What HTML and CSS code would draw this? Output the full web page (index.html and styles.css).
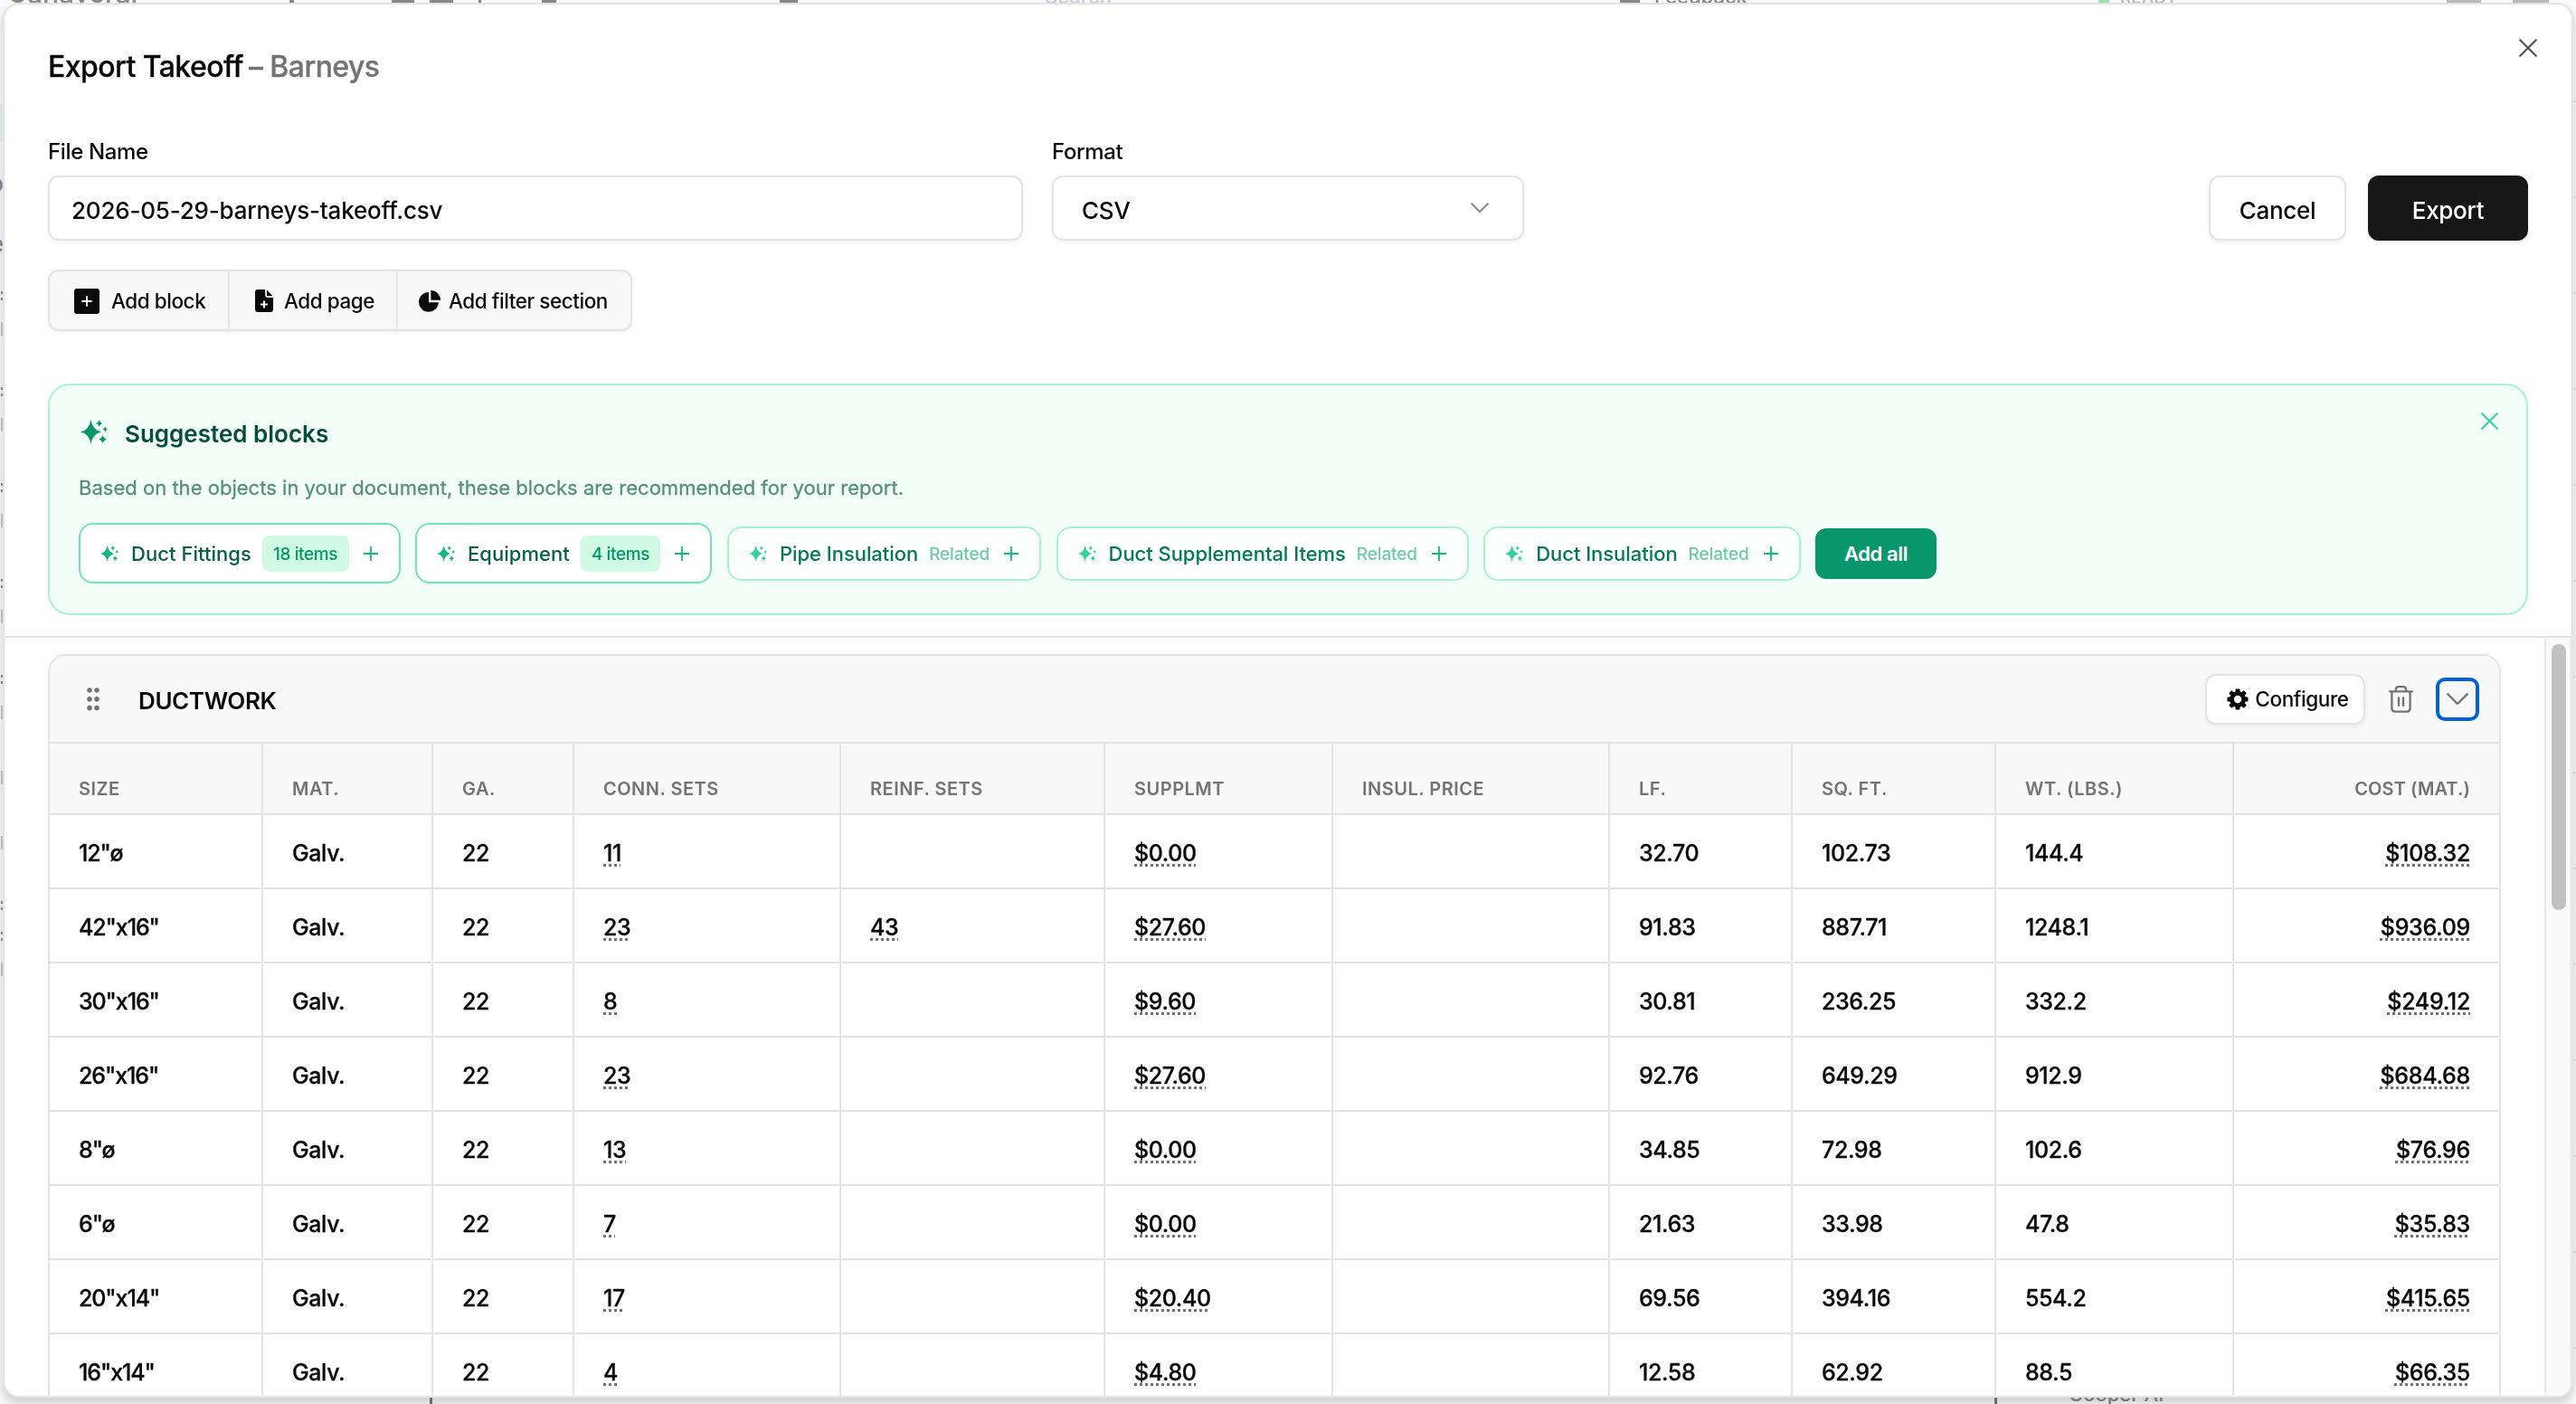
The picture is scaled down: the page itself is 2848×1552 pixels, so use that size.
FILE: index.html
```html
<!DOCTYPE html>
<html lang="en">
<head>
    <meta charset="UTF-8">
    <meta name="viewport" content="width=device-width, initial-scale=1.0">
    <title>Export Takeoff – Barneys</title>
    <link rel="stylesheet" href="styles.css">
</head>
<body>
    <svg class="sprite" width="0" height="0">
        <symbol id="sparkles" viewBox="0 0 30 27">
            <path d="M11.5 0Q13.4 11.6 23 13.5Q13.4 15.4 11.5 27Q9.6 15.4 0 13.5Q9.6 11.6 11.5 0Z"/>
            <path d="M20.7 .2Q21.5 3.2 24.4 4Q21.5 4.8 20.7 7.8Q19.9 4.8 17 4Q19.9 3.2 20.7 .2Z"/>
            <path d="M27.3 7.4Q27.9 9.9 30 10.5Q27.9 11.1 27.3 13.6Q26.7 11.1 24.6 10.5Q26.7 9.9 27.3 7.4Z"/>
            <path d="M24.5 16.8Q25.5 20.5 28.6 21.5Q25.5 22.5 24.5 26.2Q23.5 22.5 20.4 21.5Q23.5 20.5 24.5 16.8Z"/>
        </symbol>
        <symbol id="plus" viewBox="0 0 16 16">
            <path d="M8 .7V15.3M.7 8H15.3" fill="none" stroke="currentColor" stroke-width="1.8" stroke-linecap="round"/>
        </symbol>
        <symbol id="close" viewBox="0 0 20 20">
            <path d="M1.2 1.2L18.8 18.8M18.8 1.2L1.2 18.8" fill="none" stroke="currentColor" stroke-width="2.2" stroke-linecap="round"/>
        </symbol>
        <symbol id="chevron" viewBox="0 0 24 14">
            <path d="M1.3 1.3L12 12L22.7 1.3" fill="none" stroke="currentColor" stroke-width="2.4" stroke-linecap="round" stroke-linejoin="round"/>
        </symbol>
    </svg>

    <!-- document behind the dialog -->
    <div class="page">
        <div class="topbar">
            <span class="brand">Canaveral</span>
            <i class="tool t1"></i><i class="tool t2"></i><i class="tool t3"></i><i class="tool t4"></i><i class="tool t5"></i><i class="tool t6"></i>
            <span class="search">Search</span>
            <i class="tool person"></i>
            <span class="feedback">Feedback</span>
            <i class="status"></i>
            <span class="ready">READY</span>
            <i class="tool t7"></i><i class="tool t8"></i>
        </div>
        <div class="page-body">
            <div class="rail">
                <i class="selected"></i>
                <span>o</span><span>e</span>
                <i class="mark"></i><i class="block"></i>
                <i class="mark"></i><i class="block"></i>
                <i class="mark"></i><i class="block"></i>
                <i class="mark"></i><i class="block"></i>
                <i class="mark"></i><i class="block"></i>
                <i class="block"></i><i class="block"></i>
                <i class="mark"></i><i class="mark"></i><i class="block"></i>
            </div>
            <div class="rail rail-right"></div>
        </div>
        <div class="bottombar">
            <i class="post"></i>
            <i class="post"></i>
            <span class="assistant">Cooper AI</span>
        </div>
    </div>

    <div class="modal">
        <div class="modal-header">
            <button class="close-btn"><svg width="20" height="20"><use href="#close"/></svg></button>
            <h1>Export Takeoff <span>– Barneys</span></h1>

            <div class="form-row">
                <div class="field field-name">
                    <label>File Name</label>
                    <div class="input">2026-05-29-barneys-takeoff.csv</div>
                </div>
                <div class="field field-format">
                    <label>Format</label>
                    <div class="input select">CSV <svg width="20" height="12"><use href="#chevron"/></svg></div>
                </div>
                <div class="actions">
                    <button class="btn">Cancel</button>
                    <button class="btn btn-dark">Export</button>
                </div>
            </div>

            <div class="btn-group">
                <button class="add-block">
                    <svg width="28" height="28" viewBox="0 0 28 28"><rect width="28" height="28" rx="3"/><path d="M14 9V19M9 14H19" stroke="#fff" stroke-width="1.8" stroke-linecap="round"/></svg>
                    Add block
                </button>
                <button class="add-page">
                    <svg width="20" height="25" viewBox="0 0 20 25"><path d="M3 0H11.2V6.6Q11.2 9 13.6 9H20V22Q20 25 17 25H3Q0 25 0 22V3Q0 0 3 0Z"/><path d="M13 .6L19.4 7.2H14.2Q13 7.2 13 6Z"/><path d="M10 12.6V20.4M6.1 16.5H13.9" stroke="#f8f8f8" stroke-width="2"/></svg>
                    Add page
                </button>
                <button class="add-filter">
                    <svg width="24" height="24" viewBox="0 0 24 24"><path d="M11 2V13.2H21.8A10.9 10.9 0 1 1 11 2Z"/><path d="M13.4 0A10.6 10.6 0 0 1 24 10.8H13.4Z"/></svg>
                    Add filter section
                </button>
            </div>

            <div class="suggested">
                <button class="dismiss"><svg width="19" height="19"><use href="#close"/></svg></button>
                <h2><svg width="30" height="27"><use href="#sparkles"/></svg>Suggested blocks</h2>
                <p>Based on the objects in your document, these blocks are recommended for your report.</p>
                <div class="chips">
                    <button class="chip">
                        <svg class="spark" width="20" height="18"><use href="#sparkles"/></svg>
                        <span class="name">Duct Fittings</span><span class="count">18 items</span>
                        <svg width="16" height="16"><use href="#plus"/></svg>
                    </button>
                    <button class="chip">
                        <svg class="spark" width="20" height="18"><use href="#sparkles"/></svg>
                        <span class="name">Equipment</span><span class="count">4 items</span>
                        <svg width="16" height="16"><use href="#plus"/></svg>
                    </button>
                    <button class="chip related">
                        <svg class="spark" width="20" height="18"><use href="#sparkles"/></svg>
                        <span class="name">Pipe Insulation</span><span class="tag">Related</span>
                        <svg width="16" height="16"><use href="#plus"/></svg>
                    </button>
                    <button class="chip related">
                        <svg class="spark" width="20" height="18"><use href="#sparkles"/></svg>
                        <span class="name">Duct Supplemental Items</span><span class="tag">Related</span>
                        <svg width="16" height="16"><use href="#plus"/></svg>
                    </button>
                    <button class="chip related">
                        <svg class="spark" width="20" height="18"><use href="#sparkles"/></svg>
                        <span class="name">Duct Insulation</span><span class="tag">Related</span>
                        <svg width="16" height="16"><use href="#plus"/></svg>
                    </button>
                    <button class="add-all">Add all</button>
                </div>
            </div>
        </div>

        <div class="modal-body">
            <div class="blocks">
                <div class="card">
                    <div class="card-head">
                        <svg class="grip" width="14" height="26" viewBox="0 0 14 26"><circle cx="3" cy="3" r="2.8"/><circle cx="11" cy="3" r="2.8"/><circle cx="3" cy="12.8" r="2.8"/><circle cx="11" cy="12.8" r="2.8"/><circle cx="3" cy="22.6" r="2.8"/><circle cx="11" cy="22.6" r="2.8"/></svg>
                        <h3>DUCTWORK</h3>
                        <button class="configure">
                            <svg width="24" height="24" viewBox="0 0 24 24"><path fill-rule="evenodd" d="M9.8 .5h4.4l.5 3 1.5.7 2.6-1.9 2.9 2.9-1.9 2.6.7 1.5 3 .5v4.4l-3 .5-.7 1.5 1.9 2.6-2.9 2.9-2.6-1.9-1.5.7-.5 3H9.8l-.5-3-1.5-.7-2.6 1.9-2.9-2.9 1.9-2.6-.7-1.5-3-.5V9.8l3-.5.7-1.5-1.9-2.6 2.9-2.9 2.6 1.9 1.5-.7ZM12 7.8a4.2 4.2 0 1 0 0 8.4a4.2 4.2 0 1 0 0-8.4Z"/></svg>
                            Configure
                        </button>
                        <button class="trash">
                            <svg width="27" height="30" viewBox="0 0 27 30"><path d="M1.2 6.4H25.8M7.9 6V4.2Q7.9 1.2 10.9 1.2H16.1Q19.1 1.2 19.1 4.2V6M3.4 6.6V25Q3.4 28.6 7 28.6H20Q23.6 28.6 23.6 25V6.6M11 13.4V22M16 13.4V22"/></svg>
                        </button>
                        <button class="collapse"><svg width="24" height="14"><use href="#chevron"/></svg></button>
                    </div>
                    <table>
                        <thead>
                            <tr><th>SIZE</th><th>MAT.</th><th>GA.</th><th>CONN. SETS</th><th>REINF. SETS</th><th>SUPPLMT</th><th>INSUL. PRICE</th><th>LF.</th><th>SQ. FT.</th><th>WT. (LBS.)</th><th>COST (MAT.)</th></tr>
                        </thead>
                        <tbody>
                            <tr><td>12"ø</td><td>Galv.</td><td>22</td><td><u>11</u></td><td></td><td><u>$0.00</u></td><td></td><td>32.70</td><td>102.73</td><td>144.4</td><td><u>$108.32</u></td></tr>
                            <tr><td>42"x16"</td><td>Galv.</td><td>22</td><td><u>23</u></td><td><u>43</u></td><td><u>$27.60</u></td><td></td><td>91.83</td><td>887.71</td><td>1248.1</td><td><u>$936.09</u></td></tr>
                            <tr><td>30"x16"</td><td>Galv.</td><td>22</td><td><u>8</u></td><td></td><td><u>$9.60</u></td><td></td><td>30.81</td><td>236.25</td><td>332.2</td><td><u>$249.12</u></td></tr>
                            <tr><td>26"x16"</td><td>Galv.</td><td>22</td><td><u>23</u></td><td></td><td><u>$27.60</u></td><td></td><td>92.76</td><td>649.29</td><td>912.9</td><td><u>$684.68</u></td></tr>
                            <tr><td>8"ø</td><td>Galv.</td><td>22</td><td><u>13</u></td><td></td><td><u>$0.00</u></td><td></td><td>34.85</td><td>72.98</td><td>102.6</td><td><u>$76.96</u></td></tr>
                            <tr><td>6"ø</td><td>Galv.</td><td>22</td><td><u>7</u></td><td></td><td><u>$0.00</u></td><td></td><td>21.63</td><td>33.98</td><td>47.8</td><td><u>$35.83</u></td></tr>
                            <tr><td>20"x14"</td><td>Galv.</td><td>22</td><td><u>17</u></td><td></td><td><u>$20.40</u></td><td></td><td>69.56</td><td>394.16</td><td>554.2</td><td><u>$415.65</u></td></tr>
                            <tr><td>16"x14"</td><td>Galv.</td><td>22</td><td><u>4</u></td><td></td><td><u>$4.80</u></td><td></td><td>12.58</td><td>62.92</td><td>88.5</td><td><u>$66.35</u></td></tr>
                        </tbody>
                    </table>
                </div>
            </div>
            <div class="scrollbar"><div class="thumb"></div></div>
        </div>
    </div>
</body>
</html>
```
FILE: styles.css
```css
* {
    box-sizing: border-box;
}
body {
    margin: 0;
    width: 2848px;
    height: 1552px;
    overflow: hidden;
    font-family: Inter, "Liberation Sans", sans-serif;
    font-weight: 500;
    color: #0a0a0a;
    background: #f7f7f7;
}
h1, h2, h3, p {
    margin: 0;
}
button {
    font: inherit;
    color: inherit;
    letter-spacing: inherit;
    background: none;
    border: none;
    padding: 0;
    display: flex;
    align-items: center;
    justify-content: center;
}
svg {
    display: block;
    flex: none;
    fill: currentColor;
}
.sprite {
    position: absolute;
}

/* page behind */
.page {
    height: 1552px;
    display: flex;
    flex-direction: column;
}
.topbar {
    height: 7px;
    display: flex;
    align-items: flex-end;
    overflow: hidden;
    background: #fafafa;
    color: #8a8a8a;
    line-height: 1;
}
.topbar span {
    flex: none;
}
.brand {
    width: 138px;
    margin-left: 8px;
    font-size: 30px;
}
.tool {
    flex: none;
    height: 7px;
    border-bottom: 4px solid #fafafa;
    background: #8a8a8a;
}
.t1 { width: 5px; margin-left: 174px; }
.t2 { width: 25px; margin-left: 108px; }
.t3 { width: 26px; margin-left: 17px; }
.t4 { width: 3px; margin-left: 28px; }
.t5 { width: 16px; margin-left: 67px; }
.t6 { width: 20px; margin-left: 247px; }
.t7 { width: 38px; margin-left: 300px; background: #bbb; }
.t8 { width: 40px; margin-left: 35px; background: #bbb; }
.search {
    width: 80px;
    margin-left: 273px;
    font-size: 22px;
    color: #c8ccd6;
}
.person {
    width: 22px;
    margin-left: 556px;
}
.feedback {
    width: 104px;
    margin-left: 16px;
    font-size: 22px;
}
.status {
    flex: none;
    width: 12px;
    height: 7px;
    margin-left: 387px;
    background: #9be3ae;
}
.ready {
    width: 61px;
    margin-left: 12px;
    font-size: 19px;
    color: #b5b5b5;
}
.page-body {
    flex: 1;
    display: flex;
    justify-content: space-between;
}
.rail {
    width: 4px;
    overflow: hidden;
    display: flex;
    flex-direction: column;
    align-items: flex-end;
    color: #8a8a8a;
    font-size: 26px;
    line-height: 30px;
}
.rail i {
    flex: none;
}
.rail .selected {
    width: 4px;
    height: 42px;
    margin-top: 108px;
    margin-bottom: 31px;
    background: #e3f5ee;
}
.rail span {
    margin-bottom: 37px;
}
.rail .mark {
    width: 3px;
    height: 10px;
    margin-bottom: 24px;
    border-top: 3px solid #8f8f8f;
    border-bottom: 3px solid #8f8f8f;
}
.rail .block {
    width: 3px;
    height: 15px;
    margin-bottom: 57px;
    background: #c4c4c4;
}
.rail-right {
    background: repeating-linear-gradient(#f7f7f7 0 104px, #e6e6e6 104px 106px);
}
.bottombar {
    height: 9px;
    display: flex;
    align-items: flex-start;
    overflow: hidden;
    color: #858585;
}
.post {
    width: 3px;
    height: 9px;
    margin-left: 475px;
    background: #777;
}
.post + .post {
    margin-left: 1727px;
}
.assistant {
    margin-left: 79px;
    margin-top: -13px;
    font-size: 22px;
    line-height: 22px;
}

/* dialog */
.modal {
    position: fixed;
    top: 3px;
    left: 3px;
    width: 2842px;
    height: 1542px;
    display: flex;
    flex-direction: column;
    overflow: hidden;
    background: #fff;
    border: 2px solid #e4e4e4;
    border-radius: 18px;
    box-shadow: 0 6px 10px rgba(0, 0, 0, 0.16);
}
.modal-header {
    padding: 49px 48px 23px;
    border-bottom: 2px solid #e4e4e4;
}
.close-btn {
    position: absolute;
    top: 38px;
    right: 38px;
    color: #525252;
}
h1 {
    font-size: 32px;
    line-height: 40px;
    font-weight: 500;
    letter-spacing: -0.55px;
    -webkit-text-stroke: 0.3px;
    margin-bottom: 60px;
}
h1 span {
    color: #737373;
    margin-left: -2px;
}
.form-row {
    display: flex;
    align-items: flex-end;
    gap: 32px;
    margin-bottom: 32px;
}
.field-name {
    width: 1078px;
}
.field-format {
    width: 522px;
}
label {
    display: block;
    font-size: 24px;
    line-height: 28px;
    letter-spacing: -0.35px;
    margin-bottom: 12px;
}
.input {
    height: 72px;
    display: flex;
    align-items: center;
    padding: 4px 24px 0;
    font-size: 26px;
    letter-spacing: -0.2px;
    border: 2px solid #e4e4e4;
    border-radius: 12px;
    box-shadow: 0 2px 4px rgba(0, 0, 0, 0.06);
}
.select {
    justify-content: space-between;
    padding: 4px 37px 0 31px;
}
.select svg {
    color: #858585;
    margin-top: -5px;
}
.actions {
    display: flex;
    gap: 24px;
    margin-left: auto;
}
.btn {
    width: 152px;
    height: 72px;
    padding-top: 4px;
    font-size: 26px;
    letter-spacing: -0.3px;
    border: 2px solid #e4e4e4;
    border-radius: 12px;
    box-shadow: 0 2px 4px rgba(0, 0, 0, 0.07);
}
.btn-dark {
    width: 177px;
    background: #171717;
    border-color: #171717;
    color: #fff;
}
.btn-group {
    display: flex;
    width: 646px;
    height: 68px;
    font-size: 22.5px;
    letter-spacing: -0.45px;
    background: #f8f8f8;
    border: 2px solid #e4e4e4;
    border-radius: 12px;
    box-shadow: 0 2px 4px rgba(0, 0, 0, 0.06);
    margin-bottom: 58px;
}
.btn-group button {
    justify-content: flex-start;
    padding-top: 1px;
    white-space: nowrap;
}
.btn-group button + button {
    border-left: 2px solid #e4e4e4;
}
.btn-group .add-block {
    width: 197px;
    padding-left: 27px;
    gap: 13px;
}
.btn-group .add-page {
    width: 186px;
    padding-left: 28px;
    gap: 12px;
}
.btn-group .add-filter {
    padding-left: 23px;
    gap: 9px;
}

/* suggestions */
.suggested {
    position: relative;
    height: 256px;
    padding: 36px 32px 0;
    background: #f3fef9;
    border: 2px solid #a7f3d0;
    border-radius: 24px;
}
.dismiss {
    position: absolute;
    top: 30px;
    right: 31px;
    color: #34d399;
}
h2 {
    display: flex;
    gap: 19px;
    padding-left: 2px;
    font-size: 26px;
    line-height: 36px;
    font-weight: 600;
    color: #064e3b;
    margin-bottom: 26px;
}
h2 svg {
    color: #059669;
    margin-top: 2px;
}
.suggested p {
    font-size: 22px;
    line-height: 30px;
    font-weight: 400;
    letter-spacing: 0.02px;
    color: #55907a;
    -webkit-text-stroke: 0.3px #55907a;
    margin-bottom: 24px;
}
.chips {
    display: flex;
    align-items: center;
    gap: 16.5px;
}
.chip {
    height: 67px;
    padding: 0 23px 0 22px;
    font-size: 22px;
    color: #065f46;
    background: #fff;
    border: 2px solid #6ee7b7;
    border-radius: 16px;
}
.chip svg {
    color: #10b981;
}
.chip .spark {
    margin-right: 14px;
}
.chip .name {
    padding-top: 1px;
    letter-spacing: 0.05px;
}
.chip .count {
    height: 40px;
    margin: 0 16px 0 12px;
    padding: 0 12.5px 0 12px;
    font-size: 19px;
    line-height: 42px;
    letter-spacing: -0.4px;
    color: #059669;
    background: #d1fae5;
    border-radius: 8px;
}
.chip .tag {
    padding-top: 2px;
    margin: 0 16px 0 12px;
    font-size: 19px;
    letter-spacing: -0.15px;
    color: #6fcca6;
}
.related {
    height: 60px;
    color: #047857;
    background: #fcfffe;
    border-color: #a7f3d0;
}
.related .name {
    letter-spacing: -0.05px;
}
.related .spark {
    color: #34d399;
}
.add-all {
    width: 134px;
    height: 56px;
    padding-top: 1px;
    font-size: 22px;
    font-weight: 600;
    letter-spacing: -0.4px;
    color: #fff;
    background: #0a966b;
    border-radius: 12px;
}

/* blocks */
.modal-body {
    flex: 1;
    display: flex;
    min-height: 0;
}
.blocks {
    flex: 1;
    padding: 18px 48px 0;
}
.card {
    border: 2px solid #e4e4e4;
    border-radius: 20px;
    overflow: hidden;
}
.card-head {
    height: 97px;
    display: flex;
    align-items: center;
    padding: 0 22px 0 41px;
    background: #f8f8f8;
    border-bottom: 2px solid #e4e4e4;
}
.grip {
    color: #737373;
}
h3 {
    margin: 3px auto 0 43px;
    font-size: 26px;
    font-weight: 600;
    letter-spacing: -0.4px;
}
.configure {
    width: 177px;
    height: 56px;
    padding-left: 6px;
    gap: 7px;
    font-size: 22.5px;
    letter-spacing: -0.4px;
    background: #fff;
    border: 2px solid #e4e4e4;
    border-radius: 12px;
    box-shadow: 0 2px 4px rgba(0, 0, 0, 0.06);
}
.trash {
    margin: 0 25px 0 26px;
    color: #737373;
}
.trash svg {
    fill: none;
    stroke: currentColor;
    stroke-width: 2.3;
    stroke-linecap: round;
    stroke-linejoin: round;
}
.collapse {
    width: 48px;
    height: 48px;
    color: #737373;
    border: 4px solid #0062d6;
    border-radius: 10px;
    box-shadow: 0 0 0 2px #fff;
}
table {
    width: 2708px;
    table-layout: fixed;
    border-collapse: separate;
    border-spacing: 0;
}
th, td {
    padding: 0 32px;
    text-align: left;
    white-space: nowrap;
    border-right: 2px solid #e4e4e4;
    border-bottom: 2px solid #e4e4e4;
}
th {
    height: 79px;
    padding-top: 22px;
    font-size: 20px;
    font-weight: 600;
    letter-spacing: 0.5px;
    color: #737373;
    background: #f8f8f8;
}
th:nth-child(1) { width: 236px; }
th:nth-child(2) { width: 188px; }
th:nth-child(3) { width: 156px; }
th:nth-child(4) { width: 295px; }
th:nth-child(5) { width: 292px; }
th:nth-child(6) { width: 252px; }
th:nth-child(7) { width: 306px; }
th:nth-child(8) { width: 202px; }
th:nth-child(9) { width: 225px; }
th:nth-child(10) { width: 263px; }
th:nth-child(11) { width: 293px; }
td {
    height: 82px;
    padding-top: 3px;
    font-size: 25px;
    letter-spacing: -0.4px;
    -webkit-text-stroke: 0.3px #0a0a0a;
}
td:first-child {
    letter-spacing: -1.1px;
}
th:last-child, td:last-child {
    text-align: right;
    border-right: none;
}
th:last-child {
    letter-spacing: 0.1px;
}
td:last-child {
    letter-spacing: -0.3px;
}
u {
    text-decoration: underline dotted #737373 3px;
    text-underline-offset: 3px;
}
.scrollbar {
    width: 30px;
    padding: 7px 0 0 6px;
    background: #fafafa;
    border-left: 2px solid #e8e8e8;
    border-right: 2px solid #ededed;
}
.thumb {
    width: 16px;
    height: 294px;
    background: #c1c1c1;
    border-radius: 8px;
}
```
